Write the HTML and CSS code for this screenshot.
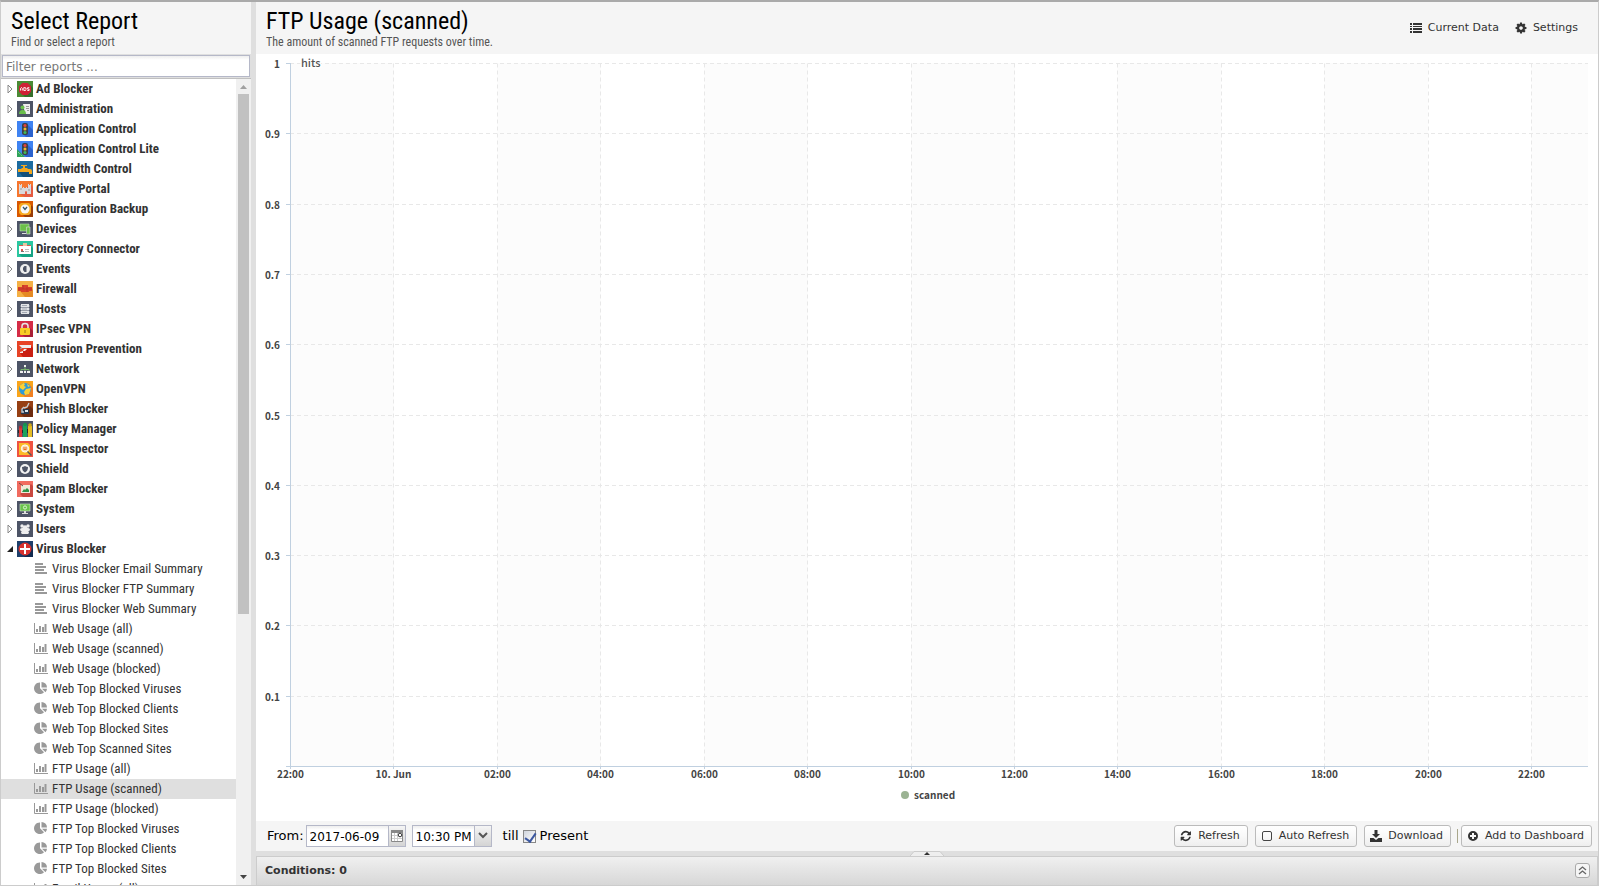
FILE: index.html
```html
<!DOCTYPE html>
<html lang="en">
<head>
  <meta charset="UTF-8">
  <meta name="viewport" content="width=device-width, initial-scale=1.0">
  <title>Reports</title>
  <link rel="stylesheet" href="styles.css">
</head>
<body>
  <svg class="sprite" aria-hidden="true">
    <symbol id="closed" viewBox="0 0 6 10"><path d="M1 1v8l4-4z" fill="#fff" stroke="#888"/></symbol>
    <symbol id="open" viewBox="0 0 6 6"><path d="M6 0v6H0z" fill="#222"/></symbol>
    <symbol id="text" viewBox="0 0 14 12"><path d="M1 2h8M1 5h11M1 8h9M1 11h12" stroke="#999" stroke-width="2"/></symbol>
    <symbol id="bars" viewBox="0 0 14 12"><path d="M.5 1v10.500H14" stroke="#999" fill="none"/><path d="M2 7h2v3H2zM5 4h2v6H5zM8 5h2v5H8zM10.500 2h2v8h-2z" fill="#999"/></symbol>
    <symbol id="pie" viewBox="0 0 14 12"><path d="M6 .5v5.800l4 4A5.800 5.800 0 1 1 6 .5zM7.500 0A5.500 5.500 0 0 1 13 5.500H7.500zM8 6.800h5a5 5 0 0 1-1.500 3.400z" fill="#999"/></symbol>
    <symbol id="adblock" viewBox="0 0 16 16"><path fill="#4b8a35" d="M0 0h16v16H0z"/><path fill="#356f2b" d="m13 4 3 3v9H8l-3-3z"/><path fill="#cf2035" d="M5.300 2h5.400L14 5.300v5.400L10.700 14H5.300L2 10.700V5.300z"/><path d="M3.500 9.500v-2l1-1 .8 1v2M6.800 6.500v3h1.700l.5-1V7zM12.300 6.700h-1.700v1.400h1.500v1.400h-1.800" stroke="#fff" stroke-width=".9" fill="none"/></symbol>
    <symbol id="admin" viewBox="0 0 16 16"><path fill="#4d5466" d="M0 0h16v16H0z"/><path fill="#eee" d="M6 3h7v10H8z"/><path stroke="#999" d="M9 5.500h3M9 7.500h3M10 9.500h2"/><circle cx="5.500" cy="6.500" r="2" fill="#6abf4b"/><path fill="#6abf4b" d="M2 13q0-4 3.500-4T9 13z"/></symbol>
    <symbol id="control" viewBox="0 0 16 16"><path fill="#3f83f2" d="M0 0h16v16H0z"/><path fill="#2a62cf" d="m10 3 6 6v7H9l-3-3z"/><rect x="5" y="2" width="6" height="12" rx="2" fill="#3c414a"/><circle cx="8" cy="4.500" r="1.500" fill="#e8413a"/><circle cx="8" cy="8" r="1.500" fill="#f5b82e"/><circle cx="8" cy="11.500" r="1.500" fill="#40b95a"/></symbol>
    <symbol id="lite" viewBox="0 0 16 16"><use href="#control"/><path fill="#2fa35a" d="M0 8l8 8H0z"/><path d="m1 11 4 4" stroke="#9fe0b0" stroke-dasharray="1"/></symbol>
    <symbol id="bandwidth" viewBox="0 0 16 16"><path fill="#1c6b9f" d="M0 0h16v16H0z"/><path fill="#124f7b" d="m11 8 5 5v3H6l-4-5z"/><path fill="#f4a71d" d="M1 8h3l1-1h1V5H4V4h6v1H8v2h2l1 1h2q2 0 2 2v3h-3v-2H1z"/></symbol>
    <symbol id="captive" viewBox="0 0 16 16"><path fill="#f6762e" d="M0 0h16v16H0z"/><path fill="#e55b41" d="m13 3 3 3v10H8l-5-3z"/><path fill="#d9d9dc" d="M2 3h1v1h1V3h1v4h1V6h1v1h2V6h1v1h1V3h1v1h1V3h1v10h-4v-2q-1-2-2 0v2H2z"/><path stroke="#999" d="M3 8h2m6 1h2"/></symbol>
    <symbol id="backup" viewBox="0 0 16 16"><path fill="#d95800" d="M0 0h16v16H0z"/><path fill="#993d08" d="m13 3 3 3v10H8l-3-3z"/><path fill="#f7a81e" d="M4 2h8l2 2v8l-2 2H4l-2-2V4z"/><circle cx="8" cy="8" r="4.500" fill="#f7f7f7"/><path d="m6 6 2 2.500L10 6" stroke="#34536b" stroke-width="1.300" fill="none"/></symbol>
    <symbol id="devices" viewBox="0 0 16 16"><path fill="#4d5466" d="M0 0h16v16H0z"/><path fill="#6cc04a" stroke="#b9ddb0" stroke-width=".6" d="M3 3h9v7H3z"/><path fill="#ddd" d="M5 12h4v1H5z"/><path fill="#6cc04a" stroke="#ddd" stroke-width=".6" d="M9.500 6H13v7H9.500z"/></symbol>
    <symbol id="directory" viewBox="0 0 16 16"><path fill="#2bc7a0" d="M0 0h16v16H0z"/><path fill="#15a384" d="m14 5 2 2v9H5l-3-3z"/><path fill="#fff" d="M2 5h12v8H2z"/><path fill="#d85a50" d="M2 4h12v1H2zM4 8h2v2H4z"/><path fill="#e8c4a0" d="M6 2h4v3H6z"/><path stroke="#bbb" d="M8 8.500h4M8 10.500h4"/><path fill="#777" d="M4 10h3v1H4z"/></symbol>
    <symbol id="events" viewBox="0 0 16 16"><path fill="#4d5466" d="M0 0h16v16H0z"/><circle cx="8" cy="8" r="5" fill="#eee"/><path d="M9.500 5v6H7.500L6 9V6.500L7.500 5" fill="#4d5466"/></symbol>
    <symbol id="firewall" viewBox="0 0 16 16"><path fill="#f4b045" d="M0 0h16v16H0z"/><path fill="#e58a24" d="m14 6 2 3v7H8l-5-6z"/><path fill="#d9402b" d="M5 4h6v2h4v4h-3v1H4v-1H1V6h4z"/><path stroke="#aa2e25" stroke-width=".6" d="M1 8h14M6 4v4m4-2v5"/></symbol>
    <symbol id="hosts" viewBox="0 0 16 16"><path fill="#4d5466" d="M0 0h16v16H0z"/><path fill="#e2e4e7" d="M4 3h8v3H4zM4 6.500h8v3H4zM4 10h8v3H4z"/><path stroke="#a4a9b4" d="M5 4.500h5M5 8h5M5 11.500h5"/><path stroke="#a4a9b4" d="M3 5h1M3 8h1M3 11h1M12 5h1M12 8h1M12 11h1"/></symbol>
    <symbol id="ipsec" viewBox="0 0 16 16"><path fill="#d52c46" d="M0 0h16v16H0z"/><path fill="#a91f37" d="m13 7 3 3v6H8l-4-3z"/><path d="M5 8V5q0-2.500 3-2.500T11 5v3" fill="none" stroke="#e7e7e7" stroke-width="1.500"/><rect x="3" y="7" width="10" height="7" rx="1" fill="#f9ce26"/><path stroke="#9a7515" d="M8 9v3"/></symbol>
    <symbol id="intrusion" viewBox="0 0 16 16"><path fill="#e74326" d="M0 0h16v16H0z"/><path fill="#c91f12" d="m14 5 2 2v9H6l-3-4z"/><path fill="#eee" d="M2 4h12v3H5zM7 8h3L8 10H6v2H3v-1l3-1z"/><path fill="#999" d="M3 7h2v1H3z"/></symbol>
    <symbol id="network" viewBox="0 0 16 16"><path fill="#4d5466" d="M0 0h16v16H0z"/><path stroke="#78b36c" fill="none" d="M4 10V8.500h8V10M8 6v4"/><path fill="#f1f1f1" d="M7 4h2v2H7zM3 10h3v2H3zM7 10h2v2H7zM10 10h3v2h-3z"/></symbol>
    <symbol id="openvpn" viewBox="0 0 16 16"><path fill="#f9a51b" d="M0 0h16v16H0z"/><path fill="#f28021" d="m12 3 4 4v9H8l-4-4z"/><circle cx="8" cy="8" r="6" fill="#2e9bd8"/><path fill="#fbd136" d="M3 4.500 6.500 2 8 3 7 5 9 6 6 9 3 7zM9 8l5-1-2 6-4 1-1-3zM10 3l3 2-2 1z"/></symbol>
    <symbol id="phish" viewBox="0 0 16 16"><path fill="#963f13" d="M0 0h16v16H0z"/><path fill="#6d2b10" d="m13 5 3 3v8H7l-4-4z"/><path fill="#26384f" d="M4 8h8v5H4z"/><path d="M7 6 5 8v3h2m0-4 3-1 2-4" stroke="#c8cdd2" stroke-width="1.400" fill="none"/><path fill="#dce7ec" d="M8 9h3v2H8z"/></symbol>
    <symbol id="policy" viewBox="0 0 16 16"><path fill="#4d5466" d="M0 0h16v16H0z"/><path fill="#de3b37" d="M2 6h3v10H2z"/><path fill="#1aa35b" d="M6 4h4v12H6z"/><path fill="#e5bd25" d="M11 5h4v11h-4z"/><circle cx="3.500" cy="6" r="1.500" fill="#b82b30"/><circle cx="8" cy="3.500" r="1.800" fill="#15934e"/><circle cx="13" cy="4" r="1.800" fill="#d4a914"/><path d="M1 9h1v3H1zm4 0h1v3H5zm5-1h1v4h-1z" fill="#222b2d"/></symbol>
    <symbol id="ssl" viewBox="0 0 16 16"><path fill="#ef5341" d="M0 0h16v16H0z"/><path fill="#fcba27" d="M2 2h9l2 2v10H2z"/><circle cx="8" cy="7.500" r="3.600" fill="#f6dfb6" stroke="#fff"/><path d="m10.500 10.500 4 4" stroke="#555" stroke-width="1.500"/><path d="M6 7h4M6.500 8.500h3" stroke="#ee6a26"/></symbol>
    <symbol id="shield" viewBox="0 0 16 16"><path fill="#4d5466" d="M0 0h16v16H0z"/><circle cx="8" cy="8" r="5" fill="#f3f3f3"/><path fill="#4d5466" d="M5 6q1.500 0 3-1 1.500 1 3 1 0 4-3 5.500Q5 10 5 6"/></symbol>
    <symbol id="spam" viewBox="0 0 16 16"><path fill="#f16b5f" d="M0 0h16v16H0z"/><path fill="#c9483f" d="m14 3 2 2v11H6l-3-3z"/><path fill="#f1e8d8" d="M4 4h9v8H4z"/><path fill="#2e9349" d="m5 11 2-3 1 1 2-2 2 2v2z"/><path d="m2 2 4 3" stroke="#704744"/></symbol>
    <symbol id="system" viewBox="0 0 16 16"><path fill="#4d5466" d="M0 0h16v16H0z"/><path fill="#69c34b" stroke="#d3e7cd" stroke-width=".6" d="M3 3h10v7H3z"/><circle cx="8" cy="6.500" r="1.600" fill="none" stroke="#ddf5d6"/><path fill="#ddd" d="M7 10h2v2h2v1H5v-1h2z"/></symbol>
    <symbol id="users" viewBox="0 0 16 16"><path fill="#4d5466" d="M0 0h16v16H0z"/><g fill="#eee"><circle cx="5" cy="5" r="1.700"/><circle cx="11" cy="5" r="1.700"/><circle cx="8" cy="6.500" r="2.300"/><path d="M3 9q0-2 2-2h6q2 0 2 2l-1 1H4zM4 12q0-3 4-3t4 3l-1 1H5z"/></g></symbol>
    <symbol id="virus" viewBox="0 0 16 16"><path fill="#1e3f6b" d="M0 0h16v16H0z"/><path fill="#122b50" d="m12 4 4 4v8H8l-4-4z"/><circle cx="8" cy="8" r="6.500" fill="#d8322e"/><path fill="#fff" d="M7 3h2v4h4v2H9v4H7V9H3V7h4z"/></symbol>
  </svg>

  <div class="app">
    <aside class="sidebar">
      <header class="panel-header">
        <h1 class="title">Select Report</h1>
        <p class="subtitle">Find or select a report</p>
      </header>
      <div class="filter">
        <input class="filter-input" type="text" placeholder="Filter reports ..." aria-label="Filter reports">
      </div>
      <div class="tree-wrap">
        <ul class="tree">
          <li><a class="category" href="#"><svg class="arrow"><use href="#closed"/></svg><svg class="app-icon"><use href="#adblock"/></svg>Ad Blocker</a></li>
          <li><a class="category" href="#"><svg class="arrow"><use href="#closed"/></svg><svg class="app-icon"><use href="#admin"/></svg>Administration</a></li>
          <li><a class="category" href="#"><svg class="arrow"><use href="#closed"/></svg><svg class="app-icon"><use href="#control"/></svg>Application Control</a></li>
          <li><a class="category" href="#"><svg class="arrow"><use href="#closed"/></svg><svg class="app-icon"><use href="#lite"/></svg>Application Control Lite</a></li>
          <li><a class="category" href="#"><svg class="arrow"><use href="#closed"/></svg><svg class="app-icon"><use href="#bandwidth"/></svg>Bandwidth Control</a></li>
          <li><a class="category" href="#"><svg class="arrow"><use href="#closed"/></svg><svg class="app-icon"><use href="#captive"/></svg>Captive Portal</a></li>
          <li><a class="category" href="#"><svg class="arrow"><use href="#closed"/></svg><svg class="app-icon"><use href="#backup"/></svg>Configuration Backup</a></li>
          <li><a class="category" href="#"><svg class="arrow"><use href="#closed"/></svg><svg class="app-icon"><use href="#devices"/></svg>Devices</a></li>
          <li><a class="category" href="#"><svg class="arrow"><use href="#closed"/></svg><svg class="app-icon"><use href="#directory"/></svg>Directory Connector</a></li>
          <li><a class="category" href="#"><svg class="arrow"><use href="#closed"/></svg><svg class="app-icon"><use href="#events"/></svg>Events</a></li>
          <li><a class="category" href="#"><svg class="arrow"><use href="#closed"/></svg><svg class="app-icon"><use href="#firewall"/></svg>Firewall</a></li>
          <li><a class="category" href="#"><svg class="arrow"><use href="#closed"/></svg><svg class="app-icon"><use href="#hosts"/></svg>Hosts</a></li>
          <li><a class="category" href="#"><svg class="arrow"><use href="#closed"/></svg><svg class="app-icon"><use href="#ipsec"/></svg>IPsec VPN</a></li>
          <li><a class="category" href="#"><svg class="arrow"><use href="#closed"/></svg><svg class="app-icon"><use href="#intrusion"/></svg>Intrusion Prevention</a></li>
          <li><a class="category" href="#"><svg class="arrow"><use href="#closed"/></svg><svg class="app-icon"><use href="#network"/></svg>Network</a></li>
          <li><a class="category" href="#"><svg class="arrow"><use href="#closed"/></svg><svg class="app-icon"><use href="#openvpn"/></svg>OpenVPN</a></li>
          <li><a class="category" href="#"><svg class="arrow"><use href="#closed"/></svg><svg class="app-icon"><use href="#phish"/></svg>Phish Blocker</a></li>
          <li><a class="category" href="#"><svg class="arrow"><use href="#closed"/></svg><svg class="app-icon"><use href="#policy"/></svg>Policy Manager</a></li>
          <li><a class="category" href="#"><svg class="arrow"><use href="#closed"/></svg><svg class="app-icon"><use href="#ssl"/></svg>SSL Inspector</a></li>
          <li><a class="category" href="#"><svg class="arrow"><use href="#closed"/></svg><svg class="app-icon"><use href="#shield"/></svg>Shield</a></li>
          <li><a class="category" href="#"><svg class="arrow"><use href="#closed"/></svg><svg class="app-icon"><use href="#spam"/></svg>Spam Blocker</a></li>
          <li><a class="category" href="#"><svg class="arrow"><use href="#closed"/></svg><svg class="app-icon"><use href="#system"/></svg>System</a></li>
          <li><a class="category" href="#"><svg class="arrow"><use href="#closed"/></svg><svg class="app-icon"><use href="#users"/></svg>Users</a></li>
          <li>
            <a class="category" href="#"><svg class="arrow arrow-open"><use href="#open"/></svg><svg class="app-icon"><use href="#virus"/></svg>Virus Blocker</a>
            <ul class="reports">
              <li><a class="report" href="#"><svg class="report-icon"><use href="#text"/></svg>Virus Blocker Email Summary</a></li>
              <li><a class="report" href="#"><svg class="report-icon"><use href="#text"/></svg>Virus Blocker FTP Summary</a></li>
              <li><a class="report" href="#"><svg class="report-icon"><use href="#text"/></svg>Virus Blocker Web Summary</a></li>
              <li><a class="report" href="#"><svg class="report-icon"><use href="#bars"/></svg>Web Usage (all)</a></li>
              <li><a class="report" href="#"><svg class="report-icon"><use href="#bars"/></svg>Web Usage (scanned)</a></li>
              <li><a class="report" href="#"><svg class="report-icon"><use href="#bars"/></svg>Web Usage (blocked)</a></li>
              <li><a class="report" href="#"><svg class="report-icon"><use href="#pie"/></svg>Web Top Blocked Viruses</a></li>
              <li><a class="report" href="#"><svg class="report-icon"><use href="#pie"/></svg>Web Top Blocked Clients</a></li>
              <li><a class="report" href="#"><svg class="report-icon"><use href="#pie"/></svg>Web Top Blocked Sites</a></li>
              <li><a class="report" href="#"><svg class="report-icon"><use href="#pie"/></svg>Web Top Scanned Sites</a></li>
              <li><a class="report" href="#"><svg class="report-icon"><use href="#bars"/></svg>FTP Usage (all)</a></li>
              <li><a class="report selected" href="#"><svg class="report-icon"><use href="#bars"/></svg>FTP Usage (scanned)</a></li>
              <li><a class="report" href="#"><svg class="report-icon"><use href="#bars"/></svg>FTP Usage (blocked)</a></li>
              <li><a class="report" href="#"><svg class="report-icon"><use href="#pie"/></svg>FTP Top Blocked Viruses</a></li>
              <li><a class="report" href="#"><svg class="report-icon"><use href="#pie"/></svg>FTP Top Blocked Clients</a></li>
              <li><a class="report" href="#"><svg class="report-icon"><use href="#pie"/></svg>FTP Top Blocked Sites</a></li>
              <li><a class="report" href="#"><svg class="report-icon"><use href="#bars"/></svg>Email Usage (all)</a></li>
            </ul>
          </li>
        </ul>
        <div class="scrollbar">
          <svg class="scroll-arrow" viewBox="0 0 15 15"><path d="M4 10h7L7.500 6z" fill="#a0a0a0"/></svg>
          <div class="scroll-track"><div class="scroll-thumb"></div></div>
          <svg class="scroll-arrow" viewBox="0 0 15 15"><path d="M4 5h7L7.500 9z" fill="#444"/></svg>
        </div>
      </div>
    </aside>

    <main class="main">
      <header class="panel-header main-header">
        <div>
          <h2 class="title">FTP Usage (scanned)</h2>
          <p class="subtitle">The amount of scanned FTP requests over time.</p>
        </div>
        <nav class="header-actions">
          <button class="plain-btn"><svg class="icon" viewBox="0 0 12 12"><path fill="#333" d="M0 1h2v2H0zM3 1h9v2H3zM0 4h2v1H0zM3 4h9v1H3zM0 6h2v2H0zM3 6h9v2H3zM0 9h2v2H0zM3 9h9v2H3z"/></svg>Current Data</button>
          <button class="plain-btn"><svg class="icon" viewBox="-80 48 1696 1696"><path fill="#333" d="M1024 896q0-106-75-181t-181-75-181 75-75 181 75 181 181 75 181-75 75-181zm512-109v222q0 12-8 23t-20 13l-185 28q-19 54-39 91 35 50 107 138 10 12 10 25t-9 23q-27 37-99 108t-94 71q-12 0-26-9l-138-108q-44 23-91 38-16 136-29 186-7 28-36 28h-222q-14 0-24.500-8.500t-11.500-21.500l-28-184q-49-16-90-37l-141 107q-10 9-25 9-14 0-25-11-126-114-165-168-7-10-7-23 0-12 8-23 15-21 51-66.500t54-70.500q-27-50-41-99l-183-27q-13-2-21-12.500t-8-23.500v-222q0-12 8-23t19-13l186-28q14-46 39-92-40-57-107-138-10-12-10-24 0-10 9-23 26-36 98.500-107.500t94.500-71.500q13 0 26 10l138 107q44-23 91-38 16-136 29-186 7-28 36-28h222q14 0 24.500 8.500t11.500 21.500l28 184q49 16 90 37l142-107q9-9 24-9 13 0 25 10 129 119 165 170 7 8 7 22 0 12-8 23-15 21-51 66.500t-54 70.500q26 50 41 98l183 28q13 2 21 12.500t8 23.500z"/></svg>Settings</button>
        </nav>
      </header>

      <div class="chart" id="chart"></div>

      <div class="toolbar">
        <label for="from">From:</label>
        <span class="field field-date">
          <input id="from" type="text" value="2017-06-09">
          <button class="trigger" aria-label="Pick a date"><svg viewBox="0 0 16 18"><path fill="#fff" stroke="#888" d="M2.500 3.500h11v11h-11z"/><path fill="#888" d="M2 3h12v3H2z"/><path stroke="#ccc" d="M3 8.500h10M3 11.500h10M5.500 6v8M8.500 6v8"/><circle cx="11" cy="8" r="1.800" fill="#fff" stroke="#333"/></svg></button>
        </span>
        <span class="field field-time">
          <input type="text" value="10:30 PM" aria-label="Start time">
          <button class="trigger" aria-label="Pick a time"><svg viewBox="0 0 16 18"><path fill="none" stroke="#555" stroke-width="2" d="m4 6 4 4 4-4"/></svg></button>
        </span>
        <label class="till" for="present">till</label>
        <input class="check" id="present" type="checkbox" checked>
        <label for="present">Present</label>
        <span class="spacer"></span>
        <button class="btn"><svg class="icon" viewBox="-100 0 1792 1536"><path fill="#333" d="M1511 928q0 5-1 7-64 268-268 434.500t-478 166.500q-146 0-282.500-55t-243.500-157l-129 129q-19 19-45 19t-45-19-19-45v-448q0-26 19-45t45-19h448q26 0 45 19t19 45-19 45l-137 137q71 66 161 102t187 36q134 0 250-65t186-179q11-17 53-117 8-23 30-23h192q13 0 22.500 9.500t9.500 22.500zm25-800v448q0 26-19 45t-45 19h-448q-26 0-45-19t-19-45 19-45l138-138q-148-137-349-137-134 0-250 65t-186 179q-11 17-53 117-8 23-30 23h-199q-13 0-22.500-9.500t-9.500-22.500v-7q65-268 270-434.500t480-166.500q146 0 284 55.500t245 156.500l130-129q19-19 45-19t45 19 19 45z"/></svg>Refresh</button>
        <button class="btn"><svg class="icon" viewBox="0 0 12 12"><rect x="1.500" y="1.500" width="9" height="9" rx="1.500" fill="none" stroke="#444"/></svg>Auto Refresh</button>
        <button class="btn"><svg class="icon" viewBox="0 0 12 12"><path fill="#333" d="M4.500 0h3v4H10L6 8 2 4h2.500zM0 8h3.500L6 10l2.500-2H12v4H0z"/></svg>Download</button>
        <span class="separator"></span>
        <button class="btn"><svg class="icon" viewBox="0 0 12 12"><path fill="#333" fill-rule="evenodd" d="M6 1a5 5 0 1 1 0 10A5 5 0 0 1 6 1M5 3v2H3v2h2v2h2V7h2V5H7V3z"/></svg>Add to Dashboard</button>
      </div>

      <div class="splitter">
        <svg class="splitter-handle" viewBox="0 0 34 5"><path d="M0 5 4 .5h26L34 5" fill="#eee" stroke="#ccc"/><path d="m14 4 3-3 3 3z" fill="#333"/></svg>
      </div>
      <footer class="conditions">
        <span>Conditions: 0</span>
        <button class="expand" aria-label="Expand conditions"><svg viewBox="0 0 13 13"><path d="m3 6 3.500-3L10 6M3 10l3.500-3 3.500 3" fill="none" stroke="#666" stroke-width="1.300"/></svg></button>
      </footer>
    </main>
  </div>

  <script>
    const chart = document.getElementById("chart");
    const times = ["22:00", "10. Jun", "02:00", "04:00", "06:00", "08:00", "10:00", "12:00", "14:00", "16:00", "18:00", "20:00", "22:00"];
    const hits = ["1", "0.9", "0.8", "0.7", "0.6", "0.5", "0.4", "0.3", "0.2", "0.1"];
    const hoursShown = 25.1;

    function drawChart() {
      const w = chart.clientWidth;
      const h = chart.clientHeight;
      const left = 34, top = 9, right = w - 10, bottom = h - 55;
      const stepX = ((right - left) * 2) / hoursShown;
      const stepY = (bottom - top) / 10;
      const y0 = bottom + 0.5;
      let bands = "", grid = "", axis = "", labels = "";

      times.forEach((time, i) => {
        const x = Math.round(left + i * stepX) + 0.5;
        if (i % 2 === 0) {
          bands += `<rect class="band" x="${x}" y="${top}" width="${Math.min(stepX, right - x)}" height="${bottom - top}"/>`;
        }
        if (i > 0) {
          grid += `<path class="grid-line" d="M${x} ${top + 0.5}V${bottom}"/>`;
        }
        axis += `<path class="axis-line" d="M${x} ${bottom}v3"/>`;
        labels += `<text class="axis-label" text-anchor="middle" x="${x}" y="${bottom + 12}">${time}</text>`;
      });

      hits.forEach((value, i) => {
        const y = Math.round(top + i * stepY) + 0.5;
        grid += `<path class="grid-line" d="M${left} ${y}H${right}"/>`;
        axis += `<path class="axis-line" d="M${left - 4} ${y}h4"/>`;
        labels += `<text class="axis-label" text-anchor="end" x="${left - 10}" y="${y + 4}">${value}</text>`;
      });

      axis += `<path class="axis-line" d="M${left + 0.5} ${top}V${bottom}M${left - 4} ${y0}H${right}"/>`;
      labels += `<text class="axis-title" x="${left + 11}" y="${top + 4}">hits</text>`;

      const mid = Math.round(w / 2);
      const legend = `<circle cx="${mid - 22}" cy="${h - 26}" r="4" fill="#9bb393"/>
        <text class="axis-label" x="${mid - 13}" y="${h - 22}">scanned</text>`;
      chart.innerHTML = `<svg class="chart-svg" role="img" aria-label="FTP Usage (scanned)">${bands}${grid}${axis}${labels}${legend}</svg>`;
    }

    drawChart();
    window.addEventListener("resize", drawChart);
  </script>
</body>
</html>
```
FILE: styles.css
```css
* {
  box-sizing: border-box;
}

body {
  margin: 0;
  font-family: "DejaVu Sans", sans-serif;
  font-size: 12px;
  color: #000;
}

button,
input {
  font-family: inherit;
}

.sprite {
  display: none;
}

.app {
  display: flex;
  height: 100vh;
  background: #dfdfdf;
  border: 1px solid #ccc;
  border-top: 2px solid #aaa;
  overflow: hidden;
}

/* sidebar */

.sidebar {
  display: flex;
  flex-direction: column;
  width: 250px;
  margin-right: 5px;
}

.panel-header {
  height: 52px;
  padding: 5px 10px 0;
  background: #f5f5f5;
}

.title {
  margin: 0;
  font-family: "Roboto Condensed", "Liberation Sans Narrow", Roboto, sans-serif;
  font-size: 24px;
  font-weight: 400;
  line-height: 28px;
}

.subtitle {
  margin: 0;
  font-family: "Roboto Condensed", "Liberation Sans Narrow", Roboto, sans-serif;
  font-size: 12px;
  line-height: 14px;
  color: #555;
}

.filter {
  padding: 1px;
  border-bottom: 1px solid #c0c0c0;
}

.filter-input {
  display: block;
  width: 100%;
  height: 22px;
  padding: 2px 3px 0;
  border: 1px solid #b5b8c8;
  font-size: 12px;
  background: linear-gradient(#eee, #fff 4px);
}

.filter-input::placeholder {
  color: #777;
}

.tree-wrap {
  display: flex;
  flex: 1;
  min-height: 0;
  background: #fff;
}

.tree,
.reports {
  margin: 0;
  padding: 0;
  list-style: none;
}

.tree {
  flex: 1;
  overflow: hidden;
  font-family: "Roboto Condensed", "Liberation Sans Narrow", Roboto, sans-serif;
  font-size: 13px;
}

.category,
.report {
  display: flex;
  align-items: center;
  height: 20px;
  padding-bottom: 2px;
  color: #333;
  text-decoration: none;
  white-space: nowrap;
}

.category {
  padding-left: 6px;
  font-weight: 700;
}

.report {
  padding-left: 33px;
}

.report.selected {
  background: #dfdfdf;
}

.arrow {
  width: 6px;
  height: 10px;
  margin: 2px 4px 0 0;
}

.arrow-open {
  height: 6px;
}

.app-icon {
  width: 16px;
  height: 16px;
  margin: 2px 3px 0 0;
}

.report-icon {
  width: 14px;
  height: 12px;
  margin-right: 4px;
}

.scrollbar {
  display: flex;
  flex-direction: column;
  width: 15px;
  background: #f0f0f0;
}

.scroll-arrow {
  width: 15px;
  height: 15px;
}

.scroll-track {
  flex: 1;
  padding: 0 2px;
}

.scroll-thumb {
  height: 67%;
  background: #c1c1c1;
}

/* main panel */

.main {
  display: flex;
  flex: 1;
  flex-direction: column;
  min-width: 0;
}

.main-header {
  display: flex;
  justify-content: space-between;
}

.header-actions {
  display: flex;
  align-items: center;
  gap: 16px;
  height: 41px;
  padding-right: 10px;
}

.plain-btn {
  display: flex;
  align-items: center;
  gap: 6px;
  padding: 0;
  border: 0;
  background: none;
  color: #333;
  font-size: 11px;
}

.icon {
  width: 12px;
  height: 12px;
}

.chart {
  flex: 1;
  min-height: 0;
  overflow: hidden;
  background: #fff;
}

.chart-svg {
  display: block;
  width: 100%;
  height: 100%;
}

.band {
  fill: #fcfcfc;
}

.grid-line {
  stroke: #e8e8e8;
  stroke-dasharray: 4 3;
}

.axis-line {
  fill: none;
  stroke: #c0d0e0;
}

.axis-label,
.axis-title {
  font-family: "Noto Sans CJK SC", sans-serif;
  font-size: 10px;
  font-weight: 700;
  fill: #444;
}

.axis-title {
  font-size: 11px;
  font-weight: 500;
  fill: #555;
  stroke: #fff;
  stroke-width: 3px;
  paint-order: stroke;
}

/* bottom toolbar */

.toolbar {
  display: flex;
  align-items: center;
  height: 30px;
  padding: 0 6px 0 11px;
  background: #f5f5f5;
  font-size: 13px;
}

.toolbar label {
  padding-bottom: 2px;
}

.field {
  display: flex;
  height: 22px;
  margin-left: 6px;
  border: 1px solid #b5b8c8;
  background: #fff;
}

.field input {
  flex: 1;
  min-width: 0;
  padding: 1px 3px 0;
  border: 0;
  font-size: 12px;
  background: linear-gradient(#eee, #fff 4px);
}

.field-date {
  width: 100px;
  margin-left: 2px;
}

.field-time {
  width: 80px;
}

.trigger {
  width: 17px;
  padding: 0;
  border: 0;
  border-left: 1px solid #b5b8c8;
  background: linear-gradient(#f5f5f5, #d4d4d4);
}

.trigger svg {
  display: block;
  width: 16px;
  height: 18px;
}

.till {
  margin-left: 11px;
}

.check {
  appearance: none;
  width: 13px;
  height: 13px;
  margin: 0 4px;
  border: 1px solid #888;
  background: linear-gradient(135deg, #d0d4dc, #fff);
}

.check:checked::before {
  content: "";
  display: block;
  width: 5px;
  height: 9px;
  margin: 0 0 0 3px;
  border: solid #3b57a0;
  border-width: 0 2px 2px 0;
  transform: rotate(35deg);
}

.spacer {
  flex: 1;
}

.btn {
  display: flex;
  align-items: center;
  gap: 6px;
  height: 22px;
  margin-left: 7px;
  padding: 0 7px 1px 5px;
  border: 1px solid #bbb;
  border-radius: 3px;
  background: linear-gradient(#fff, #f9f9f9 48%, #eee);
  color: #333;
  font-size: 11px;
  white-space: nowrap;
}

.separator {
  width: 1px;
  height: 14px;
  margin: 0 -4px 0 6px;
  background: #a9a78c;
}

.splitter {
  display: flex;
  justify-content: center;
  height: 5px;
}

.splitter-handle {
  width: 34px;
  height: 5px;
}

.conditions {
  display: flex;
  align-items: center;
  justify-content: space-between;
  height: 29px;
  padding: 0 7px 2px 8px;
  border: 1px solid #ccc;
  border-width: 1px 1px 0;
  background: linear-gradient(#f0f0f0, #d7d7d7);
  color: #333;
  font-size: 11px;
  font-weight: 700;
}

.expand {
  width: 15px;
  height: 15px;
  padding: 0;
  border: 1px solid #aaa;
  border-radius: 3px;
  background: #f5f5f5;
}

.expand svg {
  display: block;
  width: 13px;
  height: 13px;
}
```
